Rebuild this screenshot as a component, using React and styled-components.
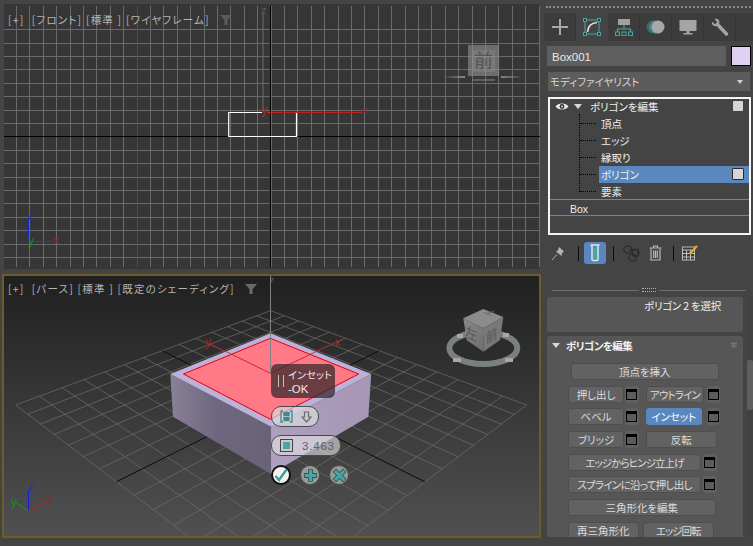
import React from "react";
import styled, { createGlobalStyle } from "styled-components";

const GlobalStyle = createGlobalStyle`
  html, body { margin: 0; padding: 0; background: #444444; }
  body { width: 753px; height: 546px; overflow: hidden; font-family: "Noto Sans CJK JP", "Liberation Sans", sans-serif; }
  * { box-sizing: border-box; }
`;

const Page = styled.div`
  display: grid;
  grid-template-columns: 541px 212px;
  width: 753px;
  height: 546px;
  background: #444444;
  font-feature-settings: "palt";
`;
const LeftColumn = styled.div`
  display: flex;
  flex-direction: column;
  align-items: flex-start;
`;
const FrontViewport = styled.section`
  position: relative;
  width: 536px;
  height: 265px;
  margin: 4px 0 0 4px;
  background: #363636;
  overflow: hidden;
`;
const PerspectiveViewport = styled.section`
  position: relative;
  width: 539px;
  height: 264px;
  margin: 5px 0 0 2px;
  border: 2px solid #6e5c28;
  overflow: hidden;
  background: linear-gradient(#202020, #505050);
`;
const Scene = styled.svg`
  display: block;
  width: 100%;
  height: 100%;
`;
const ViewLabel = styled.div`
  position: absolute;
  left: ${(p) => p.$x}px;
  top: ${(p) => p.$y}px;
  display: flex;
  align-items: center;
  gap: ${(p) => p.$gap}px;
  color: #b4b4b4;
  font-size: 10.5px;
  line-height: 14px;
  white-space: pre;
  letter-spacing: 1.2px;
`;
const Caddy = styled.div`
  position: absolute;
  left: 267px;
  top: 88px;
  display: flex;
  flex-direction: column;
  align-items: flex-start;
`;
const CaddyTip = styled.div`
  display: flex;
  align-items: center;
  gap: 4px;
  width: 64px;
  height: 34px;
  padding-left: 7px;
  border-radius: 6px;
  background: rgba(48, 38, 40, 0.72);
  color: #f0e8ea;
`;
const PauseBar = styled.div`
  width: 6px;
  height: 12px;
  border-left: 1.5px solid #c8c0c0;
  border-right: 1.5px solid #c8c0c0;
`;
const TipTitle = styled.div`
  height: 15px;
  font-size: 10px;
  line-height: 15px;
  letter-spacing: 0.3px;
  white-space: nowrap;
`;
const TipState = styled.div`
  height: 14px;
  font-family: "Liberation Sans", sans-serif;
  font-size: 11.5px;
  line-height: 14px;
  white-space: nowrap;
`;
const CaddyPill = styled.div`
  display: flex;
  align-items: center;
  gap: ${(p) => p.$gap}px;
  width: ${(p) => p.$w}px;
  height: 21px;
  margin-top: 8px;
  padding-left: 8px;
  border: 1px solid #4a4a4a;
  border-radius: 10px;
  background: rgba(226, 226, 226, 0.62);
  color: #566078;
  font-family: "Liberation Sans", sans-serif;
  font-size: 11.5px;
  letter-spacing: 0.8px;
`;
const CaddyActions = styled.div`
  display: flex;
  gap: 9px;
  margin-top: 9px;
`;
const CaddyRound = styled.div`
  display: flex;
  align-items: center;
  justify-content: center;
  width: 20px;
  height: 20px;
  border-radius: 50%;
  border: ${(p) => (p.$on ? "2px solid #101010" : "1px solid #4a4a4a")};
  background: ${(p) => (p.$on ? "#f2f2f2" : "#9a9a9a")};
`;

const SidePanel = styled.aside`
  display: flex;
  flex-direction: column;
  align-items: flex-start;
  height: 546px;
  overflow: hidden;
`;
const GripLine = styled.div`
  width: 205px;
  height: 2px;
  margin: 6px 0 0 5px;
  border-top: 2px dotted #8a8a8a;
`;
const TabBar = styled.nav`
  display: flex;
  width: 209px;
  height: 28px;
  margin: 5px 0 0 3px;
  background: #3c3c3c;
`;
const Tab = styled.div`
  display: flex;
  align-items: center;
  justify-content: center;
  width: 32px;
  height: 28px;
  background: ${(p) => (p.$active ? "#444444" : "transparent")};
  border-right: 1px solid ${(p) => (p.$active ? "transparent" : "#343434")};
`;
const NameRow = styled.div`
  display: flex;
  gap: 5px;
  margin: 5px 0 0 6px;
`;
const NameField = styled.div`
  width: 179px;
  height: 20px;
  padding-left: 5px;
  background: #5e5e5e;
  color: #e8e8e8;
  font-family: "Liberation Sans", sans-serif;
  font-size: 11.5px;
  line-height: 22px;
`;
const Swatch = styled.div`
  width: 20px;
  height: 20px;
  border: 1px solid #000;
  background: #e0d0f4;
`;
const ModifierDropdown = styled.div`
  display: flex;
  align-items: center;
  justify-content: space-between;
  width: 202px;
  height: 19px;
  margin: 6px 0 0 7px;
  padding: 0 7px 0 2px;
  background: #5c5c5c;
  color: #d6d6d6;
  font-size: 10.5px;
`;
const DownArrow = styled.div`
  width: 0;
  height: 0;
  margin-left: ${(p) => p.$ml || 0}px;
  border-left: ${(p) => p.$size || 4}px solid transparent;
  border-right: ${(p) => p.$size || 4}px solid transparent;
  border-top: ${(p) => (p.$size || 4) + 1}px solid ${(p) => p.$color || "#d0d0d0"};
`;
const Stack = styled.div`
  position: relative;
  width: 203px;
  height: 138px;
  margin: 6px 0 0 7px;
  border: 2px solid #f4f4f4;
  color: #f0f0f0;
  font-size: 10.5px;
`;
const StackList = styled.div`
  margin-top: -1px;
`;
const TreeTrunk = styled.div`
  position: absolute;
  left: 29px;
  top: 15px;
  height: 78px;
  border-left: 1px dotted #000;
`;
const HeadRow = styled.div`
  display: flex;
  align-items: center;
  height: 17px;
  padding-left: 5px;
`;
const HeadLabel = styled.span`
  margin-left: 8px;
`;
const SubRow = styled.div`
  position: relative;
  display: flex;
  align-items: center;
  height: 17px;
  margin-left: 49px;
  padding-left: 2px;
  background: ${(p) => (p.$selected ? "#5b87bf" : "transparent")};
  &::before {
    content: "";
    position: absolute;
    left: -19px;
    top: 8px;
    width: 16px;
    border-top: 1px dotted #000;
  }
`;
const StackCheck = styled.div`
  position: absolute;
  left: ${(p) => p.$x}px;
  top: ${(p) => p.$y}px;
  width: ${(p) => p.$s}px;
  height: ${(p) => p.$s}px;
  background: #d6d6d6;
  border: ${(p) => (p.$framed ? "1px solid #2a2a2a" : "none")};
  border-radius: 1px;
`;
const BaseRow = styled.div`
  height: 17px;
  margin-top: -1px;
  padding-left: 20px;
  border-top: 1px solid #808080;
  border-bottom: 1px solid #808080;
  color: #eeeeee;
  font-family: "Liberation Sans", sans-serif;
  font-size: 10.5px;
  line-height: 18px;
`;
const ToolBar = styled.div`
  display: flex;
  align-items: center;
  height: 22px;
  margin: 7px 0 0 7px;
`;
const ToolIcon = styled.div`
  display: flex;
  align-items: center;
  justify-content: center;
  width: ${(p) => p.$w}px;
  height: 22px;
  margin-left: ${(p) => p.$ml || 0}px;
  border-radius: 3px;
  background: ${(p) => (p.$active ? "#5b87bf" : "transparent")};
`;
const ToolSep = styled.div`
  width: 1px;
  height: 15px;
  margin-left: ${(p) => p.$ml}px;
  background: #0c0c0c;
`;
const Splitter = styled.div`
  display: flex;
  align-items: center;
  gap: 3px;
  height: 8px;
  margin: 22px 0 0 11px;
`;
const SplitLine = styled.div`
  width: 87px;
  height: 1px;
  background: #6c6c6c;
`;
const SplitDots = styled.div`
  width: 14px;
  height: 4px;
  border-top: 1px dotted #b0b0b0;
  border-bottom: 1px dotted #b0b0b0;
`;
const RollupArea = styled.div`
  display: flex;
  height: 240px;
  margin: 3px 0 0 6px;
  overflow: hidden;
`;
const RollupColumn = styled.div`
  display: flex;
  flex-direction: column;
  gap: 4px;
  width: 196px;
`;
const Rollout = styled.div`
  flex: none;
  height: ${(p) => p.$h}px;
  border-radius: 3px;
  background: #565656;
`;
const SelectionText = styled.div`
  padding: 1px 0 0 97px;
  color: #f0f0f0;
  font-size: 10.5px;
  line-height: 15px;
  letter-spacing: -0.2px;
`;
const RolloutHead = styled.div`
  display: flex;
  align-items: center;
  height: 18px;
  padding: 0 6px 0 5px;
  color: #f2f2f2;
  font-size: 10.5px;
  font-weight: 700;
`;
const RolloutTitle = styled.span`
  margin-left: 6px;
  flex: 1;
  letter-spacing: -0.6px;
`;
const GripDots = styled.div`
  width: 6px;
  height: 6px;
  background-image: radial-gradient(#8a8a8a 0.8px, transparent 0.9px);
  background-size: 2.5px 2.5px;
`;
const ButtonStack = styled.div`
  display: flex;
  flex-direction: column;
  gap: 5.7px;
  margin-top: 9px;
`;
const ButtonRow = styled.div`
  display: flex;
  height: 17px;
  padding-left: ${(p) => p.$pl || 21}px;
`;
const RollBtn = styled.div`
  display: flex;
  align-items: center;
  justify-content: center;
  width: ${(p) => p.$w}px;
  height: 17px;
  margin-left: ${(p) => p.$ml || 0}px;
  border-radius: 3px;
  background: ${(p) => (p.$active ? "#5b87bf" : "#626262")};
  border: 1px solid ${(p) => (p.$active ? "#5b87bf" : "#4e4e4e")};
  color: ${(p) => (p.$active ? "#ffffff" : "#dcdcdc")};
  font-size: 10.5px;
  letter-spacing: ${(p) => p.$track || 0}px;
  white-space: nowrap;
`;
const OptionBtn = styled.div`
  display: flex;
  align-items: center;
  justify-content: center;
  width: 13.5px;
  height: 17px;
  margin-left: ${(p) => p.$ml || 1}px;
  border-radius: 3px;
  background: #606060;
`;
const OptionGlyph = styled.div`
  width: 11px;
  height: 11px;
  border: 1px solid #000;
  border-top-width: 3px;
  background: #5c5c5c;
`;
const ScrollTrack = styled.div`
  position: relative;
  width: 6px;
  margin-left: 4px;
  background: #414141;
`;
const ScrollThumb = styled.div`
  position: absolute;
  top: 63px;
  left: 0;
  width: 6px;
  height: 50px;
  border-radius: 2px;
  background: #5e5e5e;
`;

/* ---------- drawings ---------- */

const range = (a, b) => Array.from({ length: b - a + 1 }, (_, i) => a + i);

const FrontScene = () => (
  <Scene viewBox="4 4 536 265">
    <g stroke="#6a6a6a" strokeWidth="1">
      {range(-19, 20).map((k) => {
        const x = Math.round(270.5 + k * 13.4) + 0.5;
        return <line key={k} x1={x} y1="6" x2={x} y2="267" />;
      })}
      {range(-8, 9).map((k) => {
        const y = Math.round(136.3 + k * 13.4) + 0.5;
        return <line key={k} x1="4" y1={y} x2="540" y2={y} />;
      })}
    </g>
    <line x1="137.5" y1="6" x2="137.5" y2="267" stroke="#4e4e4e" />
    <line x1="263" y1="14" x2="263" y2="112" stroke="#6c6c6c" />
    <line x1="270.5" y1="6" x2="270.5" y2="267" stroke="#000" />
    <line x1="4" y1="136.5" x2="540" y2="136.5" stroke="#000" />
    <path d="M262 112.5H228.7V136.5H296.5V112.5" fill="none" stroke="#fff" strokeWidth="1.2" />
    <line x1="267" y1="112.5" x2="362" y2="112.5" stroke="#c02020" strokeWidth="1.2" />
    <text x="261" y="114" fill="#a82828" fontFamily="Liberation Sans" fontSize="12">y</text>
    <text x="362" y="114" fill="#8a2a2a" fontFamily="Liberation Sans" fontSize="11">x</text>
    <text x="261" y="14" fill="#5e5e5e" fontFamily="Liberation Sans" fontSize="11">z</text>
    <g>
      <rect x="468" y="45" width="31" height="31" fill="#8c8c8c" opacity="0.65" />
      <rect x="472" y="50" width="23" height="22" fill="#9a9a9a" opacity="0.25" />
      <text x="483.5" y="68" textAnchor="middle" fill="#555" fontSize="19" fontFamily="Noto Sans CJK JP">前</text>
      <path d="M443 77L465 76V78ZM523 77L501 76V78Z" fill="#8a8a8a" />
      <rect x="472" y="79.5" width="23" height="1" fill="#8c8c8c" />
    </g>
    <path d="M28.5 242V218" stroke="#1020e0" strokeWidth="1" />
    <path d="M28.5 241.5H53" stroke="#a02020" strokeWidth="1" />
    <text x="28" y="219" fill="#2030c0" fontFamily="Liberation Sans" fontSize="11">z</text>
    <text x="53" y="244" fill="#902828" fontFamily="Liberation Sans" fontSize="11.5">x</text>
    <text x="28" y="245" fill="#1a8a1a" fontFamily="Liberation Sans" fontSize="12">y</text>
  </Scene>
);

const BACK = [270.5, 310.7];
const RIGHT = [526.6, 405];
const FRONT = [270.5, 599];
const LEFT = [15.6, 405];

function projector() {
  const [x0, y0] = BACK;
  const [x1, y1] = RIGHT;
  const [x2, y2] = FRONT;
  const [x3, y3] = LEFT;
  const dx1 = x1 - x2, dx2 = x3 - x2, dx3 = x0 - x1 + x2 - x3;
  const dy1 = y1 - y2, dy2 = y3 - y2, dy3 = y0 - y1 + y2 - y3;
  const den = dx1 * dy2 - dx2 * dy1;
  const g = (dx3 * dy2 - dx2 * dy3) / den;
  const h = (dx1 * dy3 - dx3 * dy1) / den;
  const a = x1 - x0 + g * x1, b = x3 - x0 + h * x3, c = x0;
  const d = y1 - y0 + g * y1, e = y3 - y0 + h * y3, f = y0;
  return (u, v) => {
    const w = g * u + h * v + 1;
    return [(a * u + b * v + c) / w, (d * u + e * v + f) / w];
  };
}
const project = projector();
const GRID_N = 14;

const FloorGrid = () => {
  const lines = [];
  range(0, GRID_N).forEach((k) => {
    const t = k / GRID_N;
    lines.push([project(t, 0), project(t, 1), k]);
    lines.push([project(0, t), project(1, t), k + 100]);
  });
  return (
    <g stroke="#6e6e6e" strokeWidth="0.7">
      {lines.map(([p, q, key]) => (
        <line key={key} x1={p[0]} y1={p[1]} x2={q[0]} y2={q[1]} />
      ))}
    </g>
  );
};

const PerspectiveScene = () => (
  <Scene viewBox="4 276 535 260">
    <defs>
      <linearGradient id="leftFace" x1="0" y1="0" x2="1" y2="0">
        <stop offset="0" stopColor="#8a8199" />
        <stop offset="0.45" stopColor="#6f677f" />
        <stop offset="1" stopColor="#6a6278" />
      </linearGradient>
      <linearGradient id="rightFace" x1="0" y1="0" x2="1" y2="0">
        <stop offset="0" stopColor="#ad9fbe" />
        <stop offset="1" stopColor="#a496b4" />
      </linearGradient>
      <linearGradient id="cubeLeft" x1="0" y1="0" x2="1" y2="1">
        <stop offset="0" stopColor="#8a8a8a" />
        <stop offset="1" stopColor="#6e6e6e" />
      </linearGradient>
    </defs>
    <FloorGrid />
    <g stroke="#000" strokeWidth="1">
      <line x1="116.4" y1="481.7" x2="378.9" y2="351" />
      <line x1="162.3" y1="351" x2="424.7" y2="481.7" />
    </g>
    <polygon points="170.3,374 271,426.7 271,474 173,416.7" fill="url(#leftFace)" />
    <polygon points="371.2,374 271,426.7 271,474 368.4,416.7" fill="url(#rightFace)" />
    <polygon points="270.4,333.3 371.2,374 271,426.7 170.3,374" fill="#beb1d8" />
    <polygon points="270.4,338.3 358.7,374 270.4,419.3 183.5,374" fill="#ff7a86" stroke="#dc0010" strokeWidth="1" />
    <g stroke="#c01818" strokeWidth="0.8" fill="none">
      <line x1="270.4" y1="373.3" x2="208.6" y2="343" />
      <line x1="270.4" y1="373.3" x2="337" y2="341.7" />
    </g>
    <line x1="270.5" y1="276" x2="270.5" y2="373" stroke="#808080" strokeWidth="1" />
    <text x="205" y="346" fill="#b02020" fontFamily="Liberation Sans" fontSize="12">y</text>
    <text x="335" y="346" fill="#a83030" fontFamily="Liberation Sans" fontSize="11">x</text>
    <text x="270" y="282" fill="#666" fontFamily="Liberation Sans" fontSize="8">z</text>

    <ellipse cx="483.3" cy="348" rx="34" ry="16" fill="#2c2c2c" stroke="#7a7f82" strokeWidth="6" />
    <polygon points="483.3,309 503.3,317 483.3,328.3 463.3,318.3" fill="#8c8c8c" />
    <polygon points="463.3,318.3 483.3,328.3 483.3,351.7 466.7,340" fill="url(#cubeLeft)" />
    <polygon points="503.3,317 483.3,328.3 483.3,351.7 500,340" fill="#787878" />
    <text transform="matrix(0.85 0.4 0 1 465 336)" fill="#565656" fontSize="14" fontFamily="Noto Sans CJK JP">左</text>
    <text transform="matrix(0.8 -0.45 0 1 486 344)" fill="#565656" fontSize="14" fontFamily="Noto Sans CJK JP">前</text>
    <text transform="matrix(0.8 0.38 -0.8 0.38 483 312)" fill="#5c5c5c" fontSize="11" fontFamily="Noto Sans CJK JP">上</text>
    <g fill="#a8a8a8">
      <rect x="457" y="334" width="6" height="4" />
      <rect x="503" y="333" width="6" height="4" />
      <rect x="453" y="358" width="8" height="4" />
      <rect x="505" y="358" width="8" height="4" />
    </g>

    <path d="M28.5 510.7V490" stroke="#1020e0" strokeWidth="1" />
    <path d="M28.5 510.7L48 501" stroke="#d01818" strokeWidth="1" />
    <path d="M28.5 510.7L16 503" stroke="#12a012" strokeWidth="1" />
    <text x="28" y="491" fill="#2030c8" fontFamily="Liberation Sans" fontSize="11">z</text>
    <text x="47" y="504" fill="#902828" fontFamily="Liberation Sans" fontSize="11.5">x</text>
    <text x="11" y="506" fill="#1a8a1a" fontFamily="Liberation Sans" fontSize="12">y</text>
  </Scene>
);

const Funnel = ({ color }) => (
  <svg width="12" height="12" viewBox="0 0 12 12">
    <path d="M0 1H12L7.6 6V11H4.4V6Z" fill={color} />
  </svg>
);

const TEAL = "#4aa6a4";

const TabIcons = {
  create: (
    <svg width="16" height="16" viewBox="0 0 16 16">
      <path d="M8 0V16M0 8H16" stroke="#a8a8a8" strokeWidth="2" />
    </svg>
  ),
  modify: (
    <svg width="18" height="18" viewBox="0 0 18 18" fill="none">
      <rect x="2" y="2" width="14" height="14" stroke={TEAL} />
      <path d="M4.5 14C5 8 8 5 14 4.5" stroke="#e0e0e0" strokeWidth="1.6" />
      {[[0, 0], [14, 0], [0, 14], [14, 14]].map(([x, y]) => (
        <rect key={`${x}${y}`} x={x + 0.5} y={y + 0.5} width="3" height="3" fill="#333" stroke={TEAL} />
      ))}
    </svg>
  ),
  hierarchy: (
    <svg width="18" height="18" viewBox="0 0 18 18" fill="none">
      <rect x="3" y="1" width="12" height="6" fill="#a0a0a0" />
      <path d="M9 7V11M2.5 14V11H15.5V14" stroke={TEAL} strokeWidth="1.2" />
      <rect x="0.5" y="14" width="4" height="3.5" stroke={TEAL} />
      <rect x="7" y="14" width="4" height="3.5" stroke={TEAL} />
      <rect x="13.5" y="14" width="4" height="3.5" stroke={TEAL} />
    </svg>
  ),
  motion: (
    <svg width="19" height="14" viewBox="0 0 19 14">
      <circle cx="7" cy="7" r="6.5" fill="#3c6a6c" />
      <circle cx="9.5" cy="7" r="6.5" fill="#4f8082" />
      <circle cx="12" cy="7" r="6.5" fill="#a8a8a8" />
    </svg>
  ),
  display: (
    <svg width="18" height="16" viewBox="0 0 18 16">
      <rect x="0.5" y="1" width="17" height="11" fill="#a4a4a4" />
      <rect x="7.5" y="12" width="3" height="2" fill="#a4a4a4" />
      <rect x="4.5" y="14" width="9" height="1.5" fill="#a4a4a4" />
    </svg>
  ),
  utility: (
    <svg width="18" height="18" viewBox="0 0 18 18" fill="none">
      <path d="M7 7L15.5 16" stroke="#a4a4a4" strokeWidth="3.4" strokeLinecap="round" />
      <path d="M1.2 3.8L4 6.2L6.2 4L3.6 1.2C6 0 8.6 1.6 8.4 4.4C8.3 7.2 5.6 8.6 3.2 8C1.4 7.4 .4 5.6 1.2 3.8Z" fill="#a4a4a4" />
    </svg>
  ),
};

const Eye = () => (
  <svg width="14" height="9" viewBox="0 0 14 9">
    <path d="M0.5 4.5C3 .5 11 .5 13.5 4.5C11 8.5 3 8.5 .5 4.5Z" fill="#ececec" />
    <circle cx="7" cy="4.5" r="2.4" fill="#333" />
    <circle cx="7" cy="4.5" r="0.9" fill="#ececec" />
  </svg>
);

const ToolIcons = {
  pin: (
    <svg width="14" height="15" viewBox="0 0 14 15">
      <path d="M1 14L6 8.5" stroke="#b0b0b0" strokeWidth="1" />
      <path d="M8 1L13 5.5L11 7L10.5 10L4.8 5.2L7 4.5Z" fill="#b4b4b4" />
    </svg>
  ),
  tube: (
    <svg width="10" height="18" viewBox="0 0 10 18" fill="none">
      <rect x="3" y="4" width="4" height="12" fill={TEAL} />
      <path d="M0.5 1H9.5M2 1V15.5C2 17 8 17 8 15.5V1" stroke="#e8e8e8" strokeWidth="1.4" />
    </svg>
  ),
  instance: (
    <svg width="17" height="17" viewBox="0 0 17 17" fill="none" stroke="#2c2c2c" strokeWidth="1.4">
      <circle cx="4.5" cy="4.5" r="3.6" />
      <path d="M7.5 4.5H15V10" />
      <circle cx="12.5" cy="8" r="3.4" />
      <circle cx="9.5" cy="12.5" r="3.6" />
    </svg>
  ),
  trash: (
    <svg width="13" height="16" viewBox="0 0 13 16" fill="none" stroke="#b8b8b8" strokeWidth="1.2">
      <path d="M0.5 3H12.5M4.5 3V1H8.5V3" />
      <path d="M2 3.5V15H11V3.5M4.7 5.5V13M6.5 5.5V13M8.3 5.5V13" />
    </svg>
  ),
  config: (
    <svg width="16" height="16" viewBox="0 0 16 16" fill="none">
      <rect x="0.5" y="2" width="12" height="13" fill="#3a3a3a" stroke="#bcbcbc" />
      <path d="M0.5 5H12.5M0.5 8.5H12.5M0.5 12H12.5M4.5 5V15M8.5 5V15" stroke="#bcbcbc" />
      <path d="M15 1L7.5 9" stroke="#f0a820" strokeWidth="2.4" />
    </svg>
  ),
};

const rows = [
  { pl: 24, items: [{ label: "頂点を挿入", w: 147.5 }] },
  {
    items: [
      { label: "押し出し", w: 56 }, { option: true },
      { label: "アウトライン", w: 58, ml: 7.5, track: -0.8 }, { option: true, ml: 2.5 },
    ],
  },
  {
    items: [
      { label: "ベベル", w: 56 }, { option: true },
      { label: "インセット", w: 55.5, ml: 7.5, active: true }, { option: true, ml: 5 },
    ],
  },
  {
    items: [
      { label: "ブリッジ", w: 56 }, { option: true },
      { label: "反転", w: 70.5, ml: 7.5 },
    ],
  },
  { items: [{ label: "エッジからヒンジ立上げ", w: 133, track: -0.9 }, { option: true, ml: 2 }] },
  { items: [{ label: "スプラインに沿って押し出し", w: 133, track: -0.7 }, { option: true, ml: 2 }] },
  { items: [{ label: "三角形化を編集", w: 147.5 }] },
  { items: [{ label: "再三角形化", w: 70.5 }, { label: "エッジ回転", w: 70.5, ml: 4.5, track: -1 }] },
];

export default function App() {
  return (
    <>
      <GlobalStyle />
      <Page>
        <LeftColumn>
          <FrontViewport>
            <FrontScene />
            <ViewLabel $x={4} $y={9} $gap={10}>
              <span>[+]  [フロント] [標準 ] [ワイヤフレーム]</span>
              <Funnel color="#5a5a5a" />
            </ViewLabel>
          </FrontViewport>
          <PerspectiveViewport>
            <PerspectiveScene />
            <ViewLabel $x={4} $y={6} $gap={10}>
              <span>[+]  [パース] [標準 ] [既定のシェーディング]</span>
              <Funnel color="#6a6a6a" />
            </ViewLabel>
            <Caddy>
              <CaddyTip>
                <PauseBar />
                <div>
                  <TipTitle>インセット</TipTitle>
                  <TipState>-OK</TipState>
                </div>
              </CaddyTip>
              <CaddyPill $w={48} $gap={8}>
                <svg width="13" height="13" viewBox="0 0 13 13" fill="none" stroke="#3e8a8c" strokeWidth="1.3">
                  <path d="M3 1H1V12H3M10 1H12V12H10" />
                  <rect x="4" y="2.5" width="5" height="3" fill="#3e8a8c" />
                  <rect x="4" y="7.5" width="5" height="3" fill="#3e8a8c" />
                </svg>
                <svg width="11" height="12" viewBox="0 0 11 12" fill="none" stroke="#6a6a6a" strokeWidth="1.2">
                  <path d="M3.5 1H7.5V6H10L5.5 11L1 6H3.5Z" />
                </svg>
              </CaddyPill>
              <CaddyPill $w={70} $gap={9}>
                <svg width="13" height="13" viewBox="0 0 13 13">
                  <rect x="0.5" y="0.5" width="12" height="12" fill="none" stroke="#444" />
                  <rect x="3" y="3" width="7" height="7" fill="#4aa6a4" />
                </svg>
                <span>3.463</span>
              </CaddyPill>
              <CaddyActions>
                <CaddyRound $on>
                  <svg width="14" height="14" viewBox="0 0 14 14" fill="none">
                    <path d="M1.5 8L5 12L12.5 1.5" stroke="#3f9a98" strokeWidth="2.4" />
                  </svg>
                </CaddyRound>
                <CaddyRound>
                  <svg width="15" height="15" viewBox="0 0 13 13">
                    <path d="M6.5 1V12M1 6.5H12" stroke="#2a5a5c" strokeWidth="4.2" />
                    <path d="M6.5 1.8V11.2M1.8 6.5H11.2" stroke="#4aa6a4" strokeWidth="2.6" />
                  </svg>
                </CaddyRound>
                <CaddyRound>
                  <svg width="15" height="15" viewBox="0 0 13 13">
                    <path d="M2 2L11 11M11 2L2 11" stroke="#2a5a5c" strokeWidth="4.2" />
                    <path d="M2.5 2.5L10.5 10.5M10.5 2.5L2.5 10.5" stroke="#4aa6a4" strokeWidth="2.6" />
                  </svg>
                </CaddyRound>
              </CaddyActions>
            </Caddy>
          </PerspectiveViewport>
        </LeftColumn>

        <SidePanel>
          <GripLine />
          <TabBar>
            {Object.entries(TabIcons).map(([name, icon]) => (
              <Tab key={name} $active={name === "modify"}>
                {icon}
              </Tab>
            ))}
          </TabBar>
          <NameRow>
            <NameField>Box001</NameField>
            <Swatch />
          </NameRow>
          <ModifierDropdown>
            <span>モディファイヤリスト</span>
            <DownArrow $size={3} />
          </ModifierDropdown>
          <Stack>
            <TreeTrunk />
            <StackList>
              <HeadRow>
                <Eye />
                <DownArrow $color="#d8d8d8" $ml={5} />
                <HeadLabel>ポリゴンを編集</HeadLabel>
              </HeadRow>
              <SubRow>頂点</SubRow>
              <SubRow>エッジ</SubRow>
              <SubRow>縁取り</SubRow>
              <SubRow $selected>ポリゴン</SubRow>
              <SubRow>要素</SubRow>
              <BaseRow>Box</BaseRow>
            </StackList>
            <StackCheck $x={183} $y={2} $s={10} />
            <StackCheck $x={182} $y={69} $s={12} $framed />
          </Stack>
          <ToolBar>
            <ToolIcon $w={20}>{ToolIcons.pin}</ToolIcon>
            <ToolSep $ml={10} />
            <ToolIcon $w={22} $ml={5} $active>{ToolIcons.tube}</ToolIcon>
            <ToolSep $ml={7} />
            <ToolIcon $w={22} $ml={6}>{ToolIcons.instance}</ToolIcon>
            <ToolIcon $w={22} $ml={2}>{ToolIcons.trash}</ToolIcon>
            <ToolSep $ml={7} />
            <ToolIcon $w={22} $ml={5}>{ToolIcons.config}</ToolIcon>
          </ToolBar>
          <Splitter>
            <SplitLine />
            <SplitDots />
            <SplitLine />
          </Splitter>
          <RollupArea>
            <RollupColumn>
              <Rollout $h={35}>
                <SelectionText>ポリゴン 2 を選択</SelectionText>
              </Rollout>
              <Rollout $h={240}>
                <RolloutHead>
                  <DownArrow $color="#d8d8d8" />
                  <RolloutTitle>ポリゴンを編集</RolloutTitle>
                  <GripDots />
                </RolloutHead>
                <ButtonStack>
                  {rows.map((row, i) => (
                    <ButtonRow key={i} $pl={row.pl}>
                      {row.items.map((item, j) =>
                        item.option ? (
                          <OptionBtn key={j} $ml={item.ml}>
                            <OptionGlyph />
                          </OptionBtn>
                        ) : (
                          <RollBtn key={j} $w={item.w} $ml={item.ml} $active={item.active} $track={item.track}>
                            {item.label}
                          </RollBtn>
                        )
                      )}
                    </ButtonRow>
                  ))}
                </ButtonStack>
              </Rollout>
            </RollupColumn>
            <ScrollTrack>
              <ScrollThumb />
            </ScrollTrack>
          </RollupArea>
        </SidePanel>
      </Page>
    </>
  );
}
